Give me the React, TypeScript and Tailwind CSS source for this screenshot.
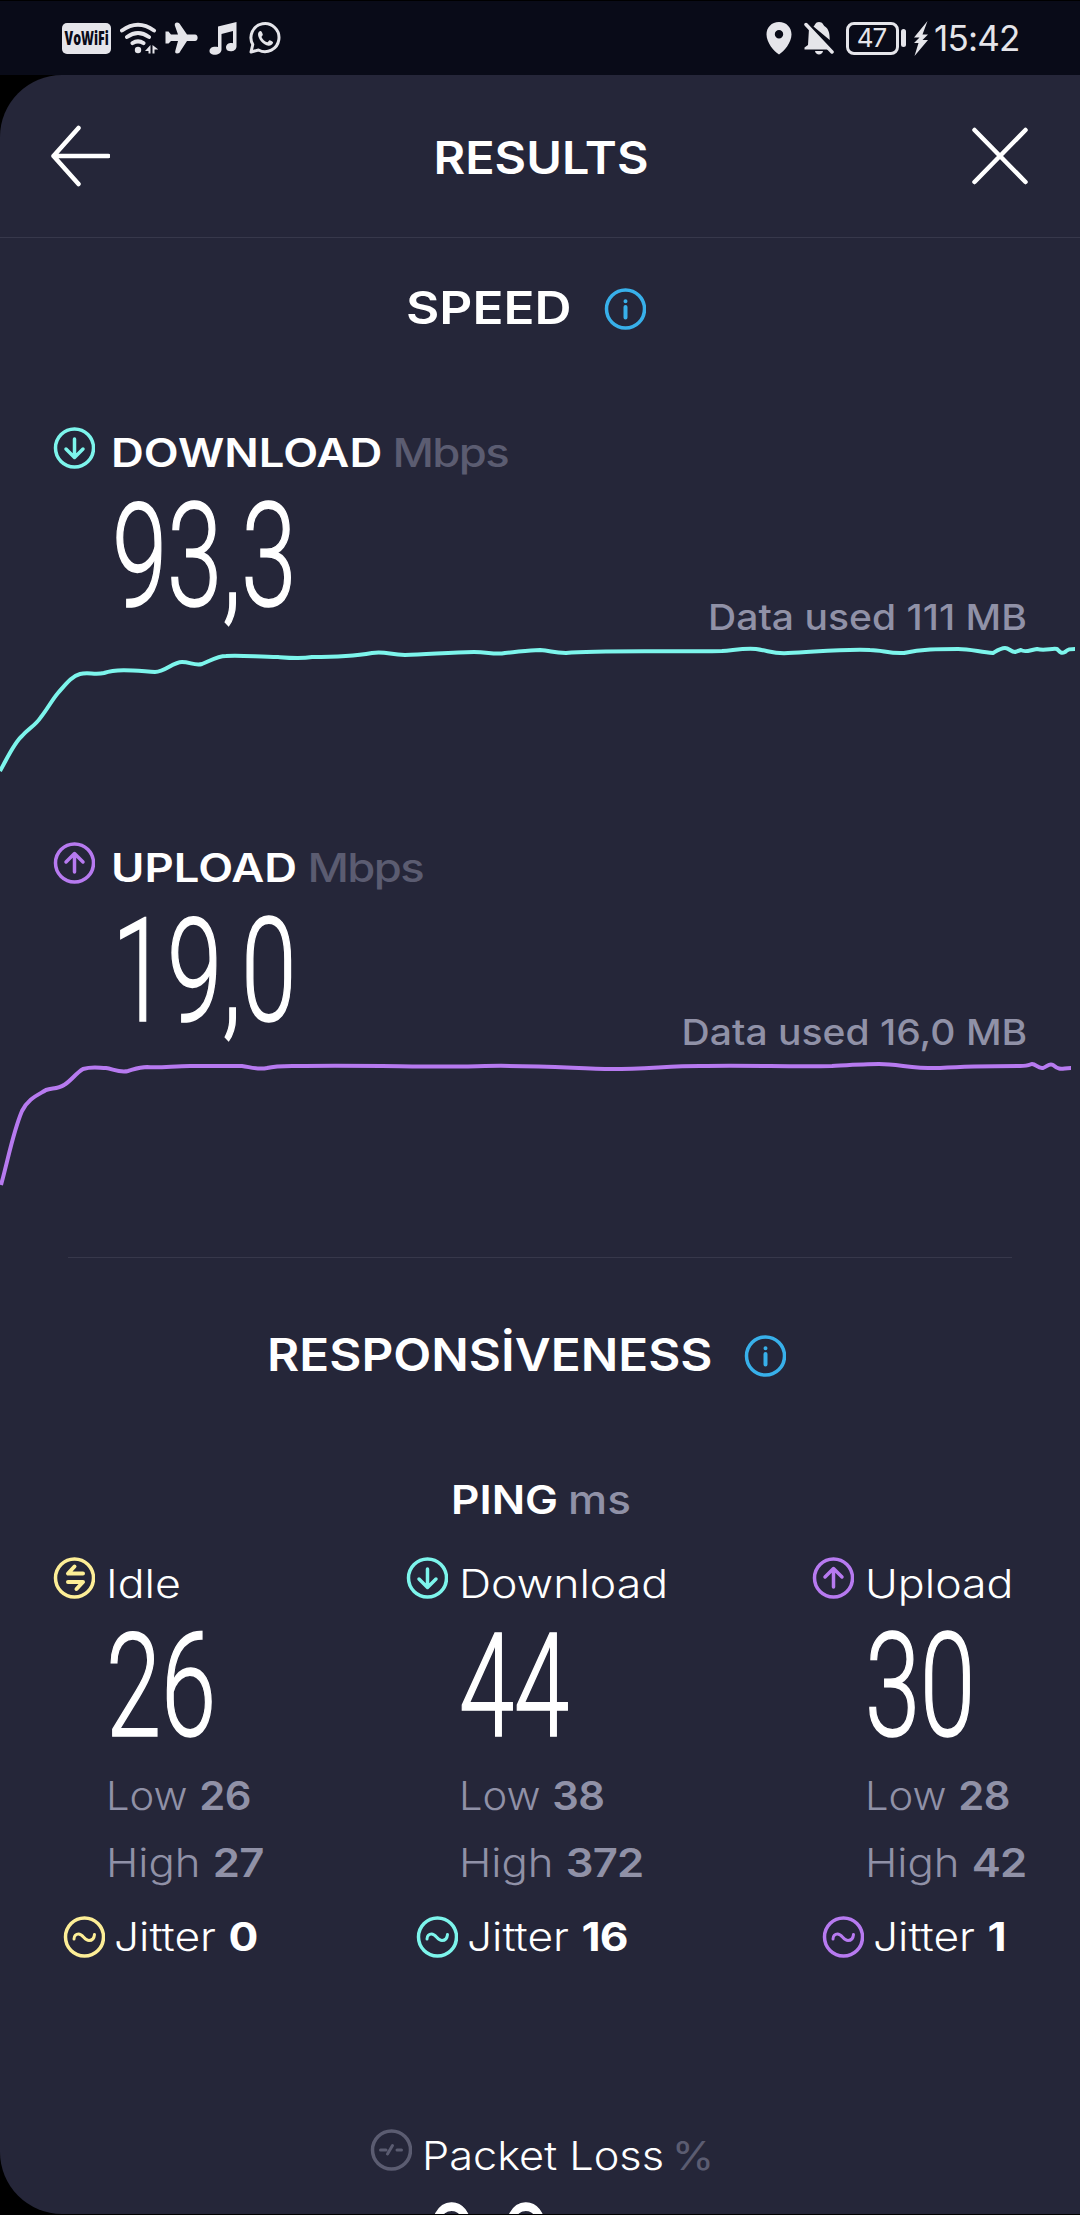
import React from "react";

type IconProps = { color: string; children: React.ReactNode };

function CircleIcon({ color, children }: IconProps) {
  return (
    <svg
      className="block h-[42px] w-[42px] shrink-0"
      viewBox="0 0 42 42"
      fill="none"
      stroke={color}
      strokeWidth="3.5"
      strokeLinecap="round"
      strokeLinejoin="round"
    >
      <circle cx="21.5" cy="21" r="19" />
      {children}
    </svg>
  );
}

const CYAN = "#7df5ec";
const PURPLE = "#b77af0";
const YELLOW = "#fdee97";

const DownIcon = () => (
  <CircleIcon color={CYAN}>
    <path d="M21.5 12v18M13 22l8.5 8.5L30 22" />
  </CircleIcon>
);

const UpIcon = () => (
  <CircleIcon color={PURPLE}>
    <path d="M21.5 30V12M13 20L21.5 11.5 30 20" />
  </CircleIcon>
);

const IdleIcon = () => (
  <CircleIcon color={YELLOW}>
    <path d="M21.5 9.5l-6.5 7H30M15 25H30l-6.5 7" strokeWidth="4" />
  </CircleIcon>
);

const JitterIcon = ({ color }: { color: string }) => (
  <CircleIcon color={color}>
    <path d="M11 23c0-3 2-5 4.500-5 2.200 0 3.700 1.500 5.200 3.200s3 3.300 5.300 3.300c3.300 0 5.200-2.500 5.500-6" strokeWidth="3" />
  </CircleIcon>
);

const LossIcon = () => (
  <CircleIcon color="#5b5c71">
    <path d="M10.5 21h5.500M17.5 25l5-8.500M27 21h4.500" strokeWidth="3" />
  </CircleIcon>
);

const InfoIcon = () => (
  <CircleIcon color="#38b0ea">
    <path d="M21.5 19v10.500M21.5 13.200v.1" strokeWidth="4" />
  </CircleIcon>
);

function StatusBar() {
  return (
    <div className="flex h-[75px] shrink-0 items-center border-t border-black bg-[#090b18] pl-[62px] text-[#e5e5ea]">
      <div className="flex h-[31px] w-[49px] items-center justify-center rounded-[5px] bg-[#e5e5ea]">
        <span className="scale-x-[0.62] font-['Open_Sans',sans-serif] text-[20px] leading-none font-extrabold text-[#090b18]">
          VoWiFi
        </span>
      </div>
      <svg className="ml-[9px] h-8 w-[38px]" viewBox="0 0 38 32" fill="none" stroke="currentColor" strokeWidth="4" strokeLinecap="round">
        <path d="M2 8.500Q18 -3 34 8.500M7 15Q18 7 29 15M12.500 21.200Q18 17.500 23.500 21.200" />
        <circle cx="18" cy="28" r="3.200" fill="currentColor" stroke="none" />
        <path d="M30.500 23v8.500h-2V29H25zM32.500 23l6 4.500h-4v4h-2z" fill="currentColor" stroke="none" />
      </svg>
      <svg className="ml-[7px] h-8 w-[33px]" viewBox="0 0 33 32" fill="currentColor">
        <path d="M12 .5c2 0 2.700 1 3.500 2.500L22 12.500h8c3.500 0 3.500 6.500 0 6.500h-8l-6.500 10c-1 1.800-1.500 2.500-3.500 2.500s-2-1.500-1.600-3L13 19H6l-2.500 2.500H.5v-12h3L6 12.500h7L10 4c-.5-1.700-.2-3.500 2-3.500z" />
      </svg>
      <svg className="ml-[11px] h-[33px] w-[28px]" viewBox="0 0 28 33" fill="currentColor">
        <path d="M9 4.500L27.500 0v24.500c0 6-10.500 6.500-10.500 1 0-4 4-5 7-4.300V9l-11.500 3v15.500c0 6.500-12 7-12 1.500 0-4 4.500-5 8.500-4z" />
      </svg>
      <svg className="ml-[12px] h-8 w-8" viewBox="0 0 32 32" fill="none" stroke="currentColor">
        <path d="M2 30l1.800-7.500A14 14 0 1 1 9.500 28z" strokeWidth="3" strokeLinejoin="round" />
        <path d="M9 12c.3-2.200 1.700-3.200 2.800-3 .7 0 2 3 2 3.700 0 .8-1.300 1.700-1.300 2.200 1.200 2.600 3 4.200 5.800 5.400.7 0 1.700-2 2.300-2 .7 0 3.400 1.400 3.500 2-.2 2.500-2.600 3.500-4.600 3.400C14 23 9 17 9 12z" fill="currentColor" stroke="none" />
      </svg>

      <svg className="ml-[485px] h-[33px] w-[26px]" viewBox="0 0 26 33" fill="currentColor" fillRule="evenodd">
        <path d="M13 0C5.500 0 .5 5.500.5 12.500c0 8 7.500 17 12.500 20 5-3 12.500-12 12.500-20C25.500 5.500 20.500 0 13 0zm0 8a4.200 4.200 0 1 1 0 8.400A4.200 4.200 0 0 1 13 8z" />
      </svg>
      <svg className="ml-[12px] h-[33px] w-[30px]" viewBox="0 0 30 33" fill="currentColor">
        <path d="M5 6.500L24.500 27.500H.5v-2L4 23zM9.500 4.500C11 3.500 11 0 15 0s4 3 6 4.500c3.500 2.500 4.700 6 4.700 13.500zM11 29h8c-.5 4.500-7.500 4.500-8 0z" />
        <path d="M2 2.500L28 30" stroke="currentColor" strokeWidth="3.500" strokeLinecap="round" />
      </svg>
      <div className="ml-[12px] flex h-[33px] w-[53px] items-center justify-center rounded-[8px] border-3 border-current">
        <span className="-mt-px -ml-[2px] font-['Inter',sans-serif] text-[26px] leading-none tracking-[-1px]">47</span>
      </div>
      <div className="ml-[2px] h-[18px] w-[5px] rounded-full bg-current" />
      <svg className="ml-[8px] h-[35px] w-[14px]" viewBox="0 0 14 35" fill="currentColor">
        <path d="M13.500 0L0 16.500h5.500L0 22h4.500L.5 35 14 19H8.500l5.500-5.500H8.500z" />
      </svg>
      <span className="ml-[6px] font-['Inter',sans-serif] text-[35px] leading-none tracking-[-0.8px]">15:42</span>
    </div>
  );
}

function Header() {
  return (
    <header className="flex h-[163px] shrink-0 items-center border-b border-[#37384b] pr-[52px] pl-[50px]">
      <svg className="h-[62px] w-[60px]" viewBox="0 0 60 62" fill="none" stroke="#fff" strokeWidth="4.500" strokeLinecap="round" strokeLinejoin="round">
        <path d="M28.500 3L3.500 31l25 28M3.500 31h55" />
      </svg>
      <h1 className="mt-[3px] flex-1 scale-x-[1.067] text-center text-[45.500px] leading-none font-semibold">RESULTS</h1>
      <svg className="h-[58px] w-[56px]" viewBox="0 0 56 58" fill="none" stroke="#fff" strokeWidth="4.500" strokeLinecap="round">
        <path d="M2.500 3l51 52M53.500 3l-51 52" />
      </svg>
    </header>
  );
}

function BigNumber({ value }: { value: string }) {
  return (
    <div className="h-[106px] w-fit origin-left scale-x-[0.69] pt-[4px] font-['Roboto',sans-serif] text-[144px] leading-[106px] font-light whitespace-nowrap [-webkit-text-stroke:1.6px_#fff]">
      {value}
    </div>
  );
}

type SpeedProps = {
  icon: React.ReactNode;
  label: string;
  value: string;
  used: string;
  color: string;
  line: string;
};

function Speed({ icon, label, value, used, color, line }: SpeedProps) {
  return (
    <section className="h-[415px] shrink-0">
      <div className="flex h-[73px] items-start pl-[53px]">
        {icon}
        <div className="mt-[6px] ml-[16px] origin-left scale-x-[1.165] text-[39px] leading-[40px] font-semibold">
          {label} <span className="-ml-px font-medium tracking-[-1.4px] text-[#5b5c71]">Mbps</span>
        </div>
      </div>
      <div className="flex h-[140px] items-start justify-between pr-[53px] pl-[112px]">
        <BigNumber value={value} />
        <div className="mt-[98px] origin-right scale-x-110 text-[35.500px] leading-[40px] font-medium text-[#9091a7]">
          Data used {used}
        </div>
      </div>
      <svg className="block h-[140px] w-full" viewBox="0 0 1080 140" fill="none" stroke={color} strokeWidth="4" strokeLinejoin="round">
        <path d={line} />
      </svg>
    </section>
  );
}

// both curves share a 1080x140 viewport
const downloadLine =
  "M0 131C8 117 14 103 22 96C29 88 35 86 41 77C48 68 52 60 58 53C66 44 72 36 80 34C88 32 95 35 104 33C118 28 138 31 155 32C165 32 173 22 182 22C190 22 195 26 202 24C210 21 217 16 226 16C242 15 258 17 278 17C290 18 300 19 312 17C335 17 355 16 372 13C386 11 390 15 405 15C425 15 450 12 474 12C488 12 495 15 505 13C518 12 528 10 540 10C552 11 553 13 566 13C600 10 660 12 722 11C735 10 744 8 756 9C770 11 774 14 788 13C815 12 840 9 870 10C882 10 890 14 904 13C922 9 938 9 958 9C970 9 980 12 993 13C998 10 1001 8 1005 8C1009 8 1011 12 1015 12L1021 10C1025 13 1030 10 1037 9C1045 11 1052 8 1057 9C1060 12 1061 14 1065 12C1068 9 1070 9 1075 9";
const uploadLine =
  "M1 130C8 105 13 77 22 56C28 44 36 41 46 35C52 33 58 34 64 30C71 26 76 18 83 14C93 11 99 13 106 13C113 14 120 18 128 16C135 14 139 12 147 12C160 13 174 11 190 11C213 11 230 11 242 11C250 12 258 15 267 13C278 10 292 11 305 11C380 10 440 13 485 11C545 10 580 14 612 14C645 14 670 11 700 11C750 10 790 12 832 11C850 10 865 9 879 9C898 9 915 14 940 13C970 11 990 11 1020 11C1030 11 1030 9 1032 9C1036 9 1038 14 1043 13C1048 11 1049 8 1053 10C1060 16 1062 13 1071 13";

type PingProps = {
  icon: React.ReactNode;
  label: string;
  value: string;
  low: string;
  high: string;
  jitter: string;
  color: string;
};

function Ping({ icon, label, value, low, high, jitter, color }: PingProps) {
  return (
    <div className="w-[200px] shrink-0 text-[39px] leading-[40px] whitespace-nowrap">
      <div className="flex h-[73px] items-start">
        {icon}
        <span className="mt-[7px] ml-[11px] origin-left scale-x-[1.145] font-light">{label}</span>
      </div>
      <div className="ml-[53px]">
        <BigNumber value={value} />
      </div>
      <div className="mt-[40px] ml-[53px] w-fit origin-left scale-x-[1.07] font-light text-[#9091a7]">
        Low <b className="font-semibold tracking-[-0.5px]">{low}</b>
      </div>
      <div className="mt-[27px] ml-[53px] w-fit origin-left scale-x-[1.12] font-light text-[#9091a7]">
        High <b className="font-semibold tracking-[-0.8px]">{high}</b>
      </div>
      <div className="mt-[33px] ml-[10px] flex items-center">
        <JitterIcon color={color} />
        <span className="ml-[9px] origin-left scale-x-[1.135] font-light">
          Jitter <b className="font-bold tracking-[-0.8px]">{jitter}</b>
        </span>
      </div>
    </div>
  );
}

export default function App() {
  return (
    <div className="flex h-[2215px] w-[1080px] flex-col overflow-hidden border-b border-black bg-black font-['Inter',sans-serif] text-white">
      <StatusBar />
      <main className="flex min-h-0 flex-1 flex-col overflow-hidden rounded-l-[62px] bg-[#252639]">
        <Header />
        <div className="mt-[50px] flex h-[139px] shrink-0 items-start pl-[406px]">
          <h2 className="-mt-px w-[198px] origin-left scale-x-[1.127] text-[45.500px] leading-[42px] font-semibold">
            SPEED
          </h2>
          <InfoIcon />
        </div>
        <Speed icon={<DownIcon />} label="DOWNLOAD" value="93,3" used="111 MB" color={CYAN} line={downloadLine} />
        <Speed icon={<UpIcon />} label="UPLOAD" value="19,0" used="16,0 MB" color={PURPLE} line={uploadLine} />
        <div className="mx-[68px] h-px shrink-0 bg-[#37384b]" />
        <div className="mt-[77px] flex h-[142px] shrink-0 items-start pl-[267px]">
          <h2 className="-mt-px w-[477px] origin-left scale-x-[1.087] text-[45.500px] leading-[42px] font-semibold">
            RESPONSİVENESS
          </h2>
          <InfoIcon />
        </div>
        <div className="ml-[2px] shrink-0 scale-x-[1.13] text-center text-[39px] leading-[46px] font-semibold">
          PING <span className="-ml-px font-medium text-[#9091a7]">ms</span>
        </div>
        <div className="mt-[34px] flex shrink-0 pl-[53px]">
          <div className="w-[353px]">
            <Ping icon={<IdleIcon />} label="Idle" value="26" low="26" high="27" jitter="0" color={YELLOW} />
          </div>
          <div className="w-[406px]">
            <Ping icon={<DownIcon />} label="Download" value="44" low="38" high="372" jitter="16" color={CYAN} />
          </div>
          <Ping icon={<UpIcon />} label="Upload" value="30" low="28" high="42" jitter="1" color={PURPLE} />
        </div>
        <div className="mt-[171px] flex h-[73px] shrink-0 items-start pl-[370px] text-[39px] leading-[40px]">
          <LossIcon />
          <span className="mt-[7px] ml-[10px] origin-left scale-x-[1.11] font-light">
            Packet Loss <span className="-ml-[4px] font-normal text-[#5b5c71]">%</span>
          </span>
        </div>
        <div className="shrink-0 pl-[424px]">
          <BigNumber value="0,0" />
        </div>
      </main>
    </div>
  );
}
